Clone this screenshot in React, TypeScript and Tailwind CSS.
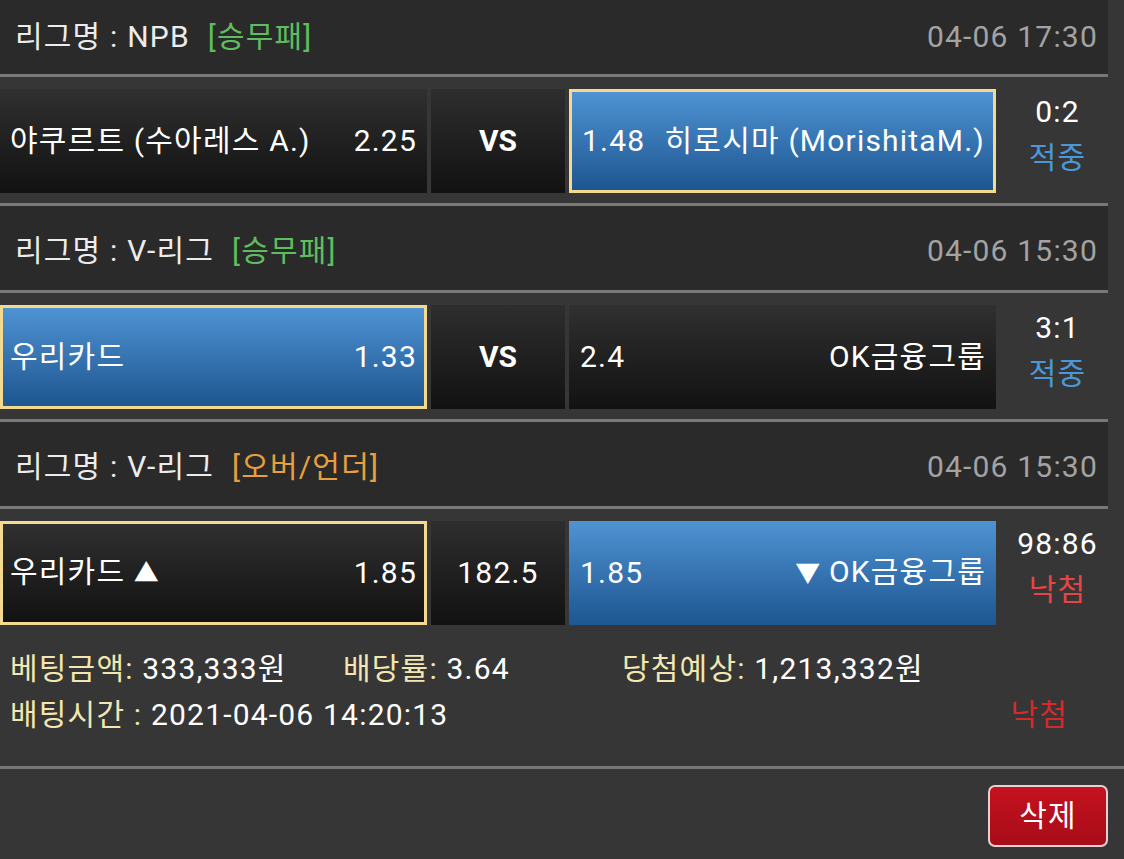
import React from "react";

type Side = { text: React.ReactNode; odds: string; blue?: boolean; sel?: boolean };

function Cell({ side, align }: { side: Side; align: "left" | "right" }) {
  const bg = side.blue
    ? "bg-gradient-to-b from-[#4f93d4] to-[#1d5690]"
    : "bg-gradient-to-b from-[#303030] to-[#121212]";
  const border = side.sel ? "border-[3px] border-[#f3da8f]" : "";
  let pad = "";
  if (align === "left") pad = side.sel ? "pl-[7px] pr-[7px]" : "pl-[10px] pr-[10px]";
  else pad = side.sel ? "pl-[10px] pr-[8px]" : "pl-[11px] pr-[10px]";
  return (
    <div className={`flex h-[104px] w-[427px] shrink-0 items-center justify-between ${bg} ${border} ${pad}`}>
      {align === "left" ? (
        <>
          <span>{side.text}</span>
          <span>{side.odds}</span>
        </>
      ) : (
        <>
          <span>{side.odds}</span>
          <span>{side.text}</span>
        </>
      )}
    </div>
  );
}

function Header({ league, type, typeColor, date, first }: { league: string; type: string; typeColor: string; date: string; first?: boolean }) {
  return (
    <div
      className={`flex w-[1108px] items-center justify-between border-b-[3px] border-[#787878] bg-[#2a2a2a] pl-[15px] pr-[10px] ${
        first ? "h-[77px]" : "h-[87px] pt-[6px]"
      }`}
    >
      <div className="flex items-center">
        <span className="text-[#ececec]">리그명 : {league}</span>
        <span className={`ml-[18px] ${typeColor}`}>[{type}]</span>
      </div>
      <span className="text-[#a3a3a3]">{date}</span>
    </div>
  );
}

function Tri({ c }: { c: string }) {
  return <span className="text-[25px] tracking-normal">{c}</span>;
}

function MatchRow({
  left,
  mid,
  right,
  score,
  result,
  resultColor,
  vsBold,
}: {
  left: Side;
  mid: string;
  right: Side;
  score: string;
  result: string;
  resultColor: string;
  vsBold?: boolean;
}) {
  return (
    <div className="flex h-[126px] items-start pt-[12px]">
      <Cell side={left} align="left" />
      <div
        className={`ml-[4px] flex h-[104px] w-[134px] shrink-0 items-center justify-center bg-gradient-to-b from-[#2e2e2e] to-[#121212] ${
          vsBold ? "font-bold tracking-normal" : ""
        }`}
      >
        {mid}
      </div>
      <div className="ml-[4px]">
        <Cell side={right} align="right" />
      </div>
      <div className="flex w-[113px] shrink-0 flex-col items-center pl-[10px] leading-[46px]">
        <span className="text-white">{score}</span>
        <span className={resultColor}>{result}</span>
      </div>
    </div>
  );
}

export default function App() {
  return (
    <div
      className="h-[859px] w-[1124px] overflow-hidden bg-[#363636] text-[30px] leading-[36px] tracking-[1.2px] text-white"
      style={{ fontFamily: 'Roboto, "Noto Sans CJK KR", sans-serif' }}
    >
      <Header first league="NPB" type="승무패" typeColor="text-[#5fbd5f]" date="04-06 17:30" />
      <MatchRow
        left={{ text: "야쿠르트 (수아레스 A.)", odds: "2.25" }}
        mid="VS"
        vsBold
        right={{ text: "히로시마 (MorishitaM.)", odds: "1.48", blue: true, sel: true }}
        score="0:2"
        result="적중"
        resultColor="text-[#4b98d8]"
      />
      <div className="w-[1108px] border-t-[3px] border-[#787878]" />
      <Header league="V-리그" type="승무패" typeColor="text-[#5fbd5f]" date="04-06 15:30" />
      <MatchRow
        left={{ text: "우리카드", odds: "1.33", blue: true, sel: true }}
        mid="VS"
        vsBold
        right={{ text: "OK금융그룹", odds: "2.4" }}
        score="3:1"
        result="적중"
        resultColor="text-[#4b98d8]"
      />
      <div className="w-[1108px] border-t-[3px] border-[#787878]" />
      <Header league="V-리그" type="오버/언더" typeColor="text-[#e8a03e]" date="04-06 15:30" />
      <MatchRow
        left={{
          text: (
            <>
              우리카드 <Tri c="▲" />
            </>
          ),
          odds: "1.85",
          sel: true,
        }}
        mid="182.5"
        right={{
          text: (
            <>
              <Tri c="▼" /> OK금융그룹
            </>
          ),
          odds: "1.85",
          blue: true,
        }}
        score="98:86"
        result="낙첨"
        resultColor="text-[#e64545]"
      />
      <div className="w-[1108px] pb-[28px] pl-[10px] pt-[11px] leading-[46px]">
        <div className="flex">
          <div className="w-[333px]">
            <span className="text-[#f2e7b0]">베팅금액:</span> 333,333원
          </div>
          <div className="w-[279px]">
            <span className="text-[#f2e7b0]">배당률:</span> 3.64
          </div>
          <div>
            <span className="text-[#f2e7b0]">당첨예상:</span> 1,213,332원
          </div>
        </div>
        <div className="flex justify-between pr-[40px]">
          <div>
            <span className="text-[#f2e7b0]">배팅시간 :</span> 2021-04-06 14:20:13
          </div>
          <span className="text-[#d42a2a]">낙첨</span>
        </div>
      </div>
      <div className="border-t-[3px] border-[#787878]" />
      <div className="flex justify-end pr-[16px] pt-[16px]">
        <button className="flex h-[62px] w-[120px] items-center justify-center rounded-[7px] border-[2px] border-[#ead0d0] bg-gradient-to-b from-[#c4121f] to-[#a80c18] text-white">
          삭제
        </button>
      </div>
    </div>
  );
}
